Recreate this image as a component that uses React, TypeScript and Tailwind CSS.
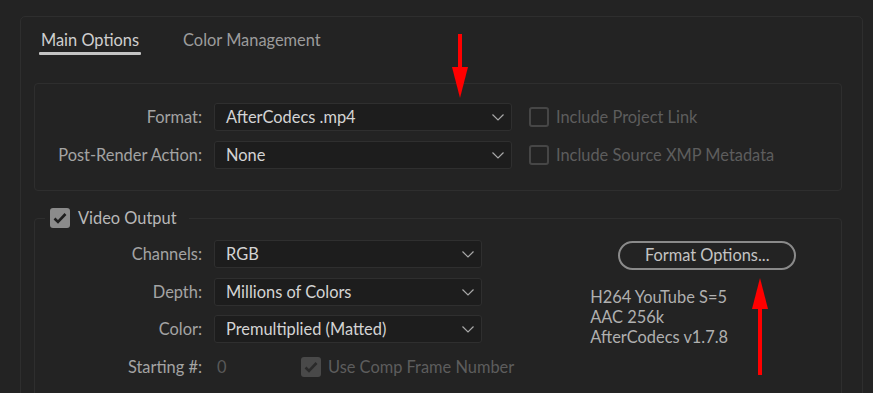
import React from "react";

const font = { fontFamily: '"Lato", "Open Sans", sans-serif' };

function Chevron() {
  return (
    <svg width="12" height="7" viewBox="0 0 12 7" className="shrink-0">
      <path d="M0.5 0.5 L6 6 L11.5 0.5" fill="none" stroke="#a8a8a8" strokeWidth="1.2" />
    </svg>
  );
}

function Dropdown({ value, width }: { value: string; width: string }) {
  return (
    <div
      className={`${width} h-[28px] flex items-center justify-between pl-[11px] pr-[7px] bg-[#1d1d1d] border border-[#2f2f2f] rounded-[3px] text-[#d4d4d4]`}
    >
      <span>{value}</span>
      <Chevron />
    </div>
  );
}

function Check({ checked, disabled }: { checked?: boolean; disabled?: boolean }) {
  if (checked) {
    return (
      <div
        className={`w-[20px] h-[20px] rounded-[3px] flex items-center justify-center shrink-0 ${
          disabled ? "bg-[#494949]" : "bg-[#8b8b8b]"
        }`}
      >
        <svg width="14" height="12" viewBox="0 0 14 12">
          <path
            d="M1.5 6.5 L5 10 L12.5 2"
            fill="none"
            stroke={disabled ? "#2a2a2a" : "#1e1e1e"}
            strokeWidth="2.6"
          />
        </svg>
      </div>
    );
  }
  return <div className="w-[20px] h-[20px] rounded-[3px] border-2 border-[#464646] shrink-0" />;
}

export default function App() {
  return (
    <div className="w-[873px] h-[393px] overflow-hidden bg-[#232323] relative text-[16.4px]" style={font}>
      <div className="absolute inset-0 pointer-events-none z-10">
        <svg width="873" height="393" className="absolute left-0 top-0">
          <rect x="458" y="34" width="4" height="34" fill="#ff0000" />
          <polygon points="452,67 468,67 460,98" fill="#ff0000" />
          <polygon points="760,278 752,309 768,309" fill="#ff0000" />
          <rect x="758" y="308" width="4" height="67" fill="#ff0000" />
        </svg>
      </div>
      <div className="pt-[16px] pl-[20px] pr-[10px] h-full">
        <div className="h-[420px] border border-[#2e2e2e] rounded-[5px] pl-[13px] pr-[20px]">
          {/* Tabs */}
          <div className="flex items-start h-[66px] pl-[5px] pt-[12px] gap-[42px]">
            <div className="flex flex-col items-stretch">
              <span className="px-[2px] text-[#cfcfcf] leading-[22px]">Main Options</span>
              <div className="h-[3px] mt-[1px] bg-[#c4c4c4] rounded-[1px]" />
            </div>
            <span className="text-[#9c9c9c] leading-[22px]">Color Management</span>
          </div>

          {/* Box 1 */}
          <div className="border border-[#2e2e2e] rounded-[4px] pt-[19px] pb-[21px] flex flex-col gap-[10px]">
            <div className="flex items-center">
              <div className="w-[167px] text-right text-[#a4a4a4]">Format:</div>
              <div className="ml-[12px]">
                <Dropdown value="AfterCodecs .mp4" width="w-[298px]" />
              </div>
              <div className="ml-[17px] flex items-center gap-[7px] text-[#5d5d5d]">
                <Check />
                <span>Include Project Link</span>
              </div>
            </div>
            <div className="flex items-center">
              <div className="w-[167px] text-right text-[#a4a4a4]">Post-Render Action:</div>
              <div className="ml-[12px]">
                <Dropdown value="None" width="w-[298px]" />
              </div>
              <div className="ml-[17px] flex items-center gap-[7px] text-[#5d5d5d]">
                <Check />
                <span>Include Source XMP Metadata</span>
              </div>
            </div>
          </div>

          {/* Video Output */}
          <fieldset className="mt-[16px] border border-[#2e2e2e] rounded-[4px] pb-[20px] min-w-0">
            <legend className="ml-[10px] pl-[5px] pr-[12px]">
              <div className="flex items-center gap-[8px] h-[22px]">
                <Check checked />
                <span className="text-[#b8b8b8]">Video Output</span>
              </div>
            </legend>
            <div className="flex pt-[11px]">
              <div className="flex flex-col">
                <div className="flex items-center h-[28px]">
                  <div className="w-[167px] text-right text-[#a4a4a4]">Channels:</div>
                  <div className="ml-[12px]">
                    <Dropdown value="RGB" width="w-[268px]" />
                  </div>
                </div>
                <div className="flex items-center h-[28px] mt-[10px]">
                  <div className="w-[167px] text-right text-[#a4a4a4]">Depth:</div>
                  <div className="ml-[12px]">
                    <Dropdown value="Millions of Colors" width="w-[268px]" />
                  </div>
                </div>
                <div className="flex items-center h-[28px] mt-[9px]">
                  <div className="w-[167px] text-right text-[#a4a4a4]">Color:</div>
                  <div className="ml-[12px]">
                    <Dropdown value="Premultiplied (Matted)" width="w-[268px]" />
                  </div>
                </div>
                <div className="flex items-center h-[20px] mt-[14px]">
                  <div className="w-[167px] text-right text-[#a4a4a4]">Starting #:</div>
                  <div className="ml-[15px] w-[84px] text-[#595959]">0</div>
                  <div className="flex items-center gap-[7px] text-[#5d5d5d]">
                    <Check checked disabled />
                    <span>Use Comp Frame Number</span>
                  </div>
                </div>
              </div>
              <div className="ml-[76px] flex flex-col">
                <div className="w-[178px] h-[29px] ml-[28px] mt-[1px] rounded-full border-2 border-[#8a8a8a] flex items-center justify-center text-[#c4c4c4]">
                  Format Options...
                </div>
                <div className="mt-[17px] text-[#b0b0b0] leading-[20px]">
                  <div>H264 YouTube S=5</div>
                  <div>AAC 256k</div>
                  <div>AfterCodecs v1.7.8</div>
                </div>
              </div>
            </div>
          </fieldset>
        </div>
      </div>
    </div>
  );
}
